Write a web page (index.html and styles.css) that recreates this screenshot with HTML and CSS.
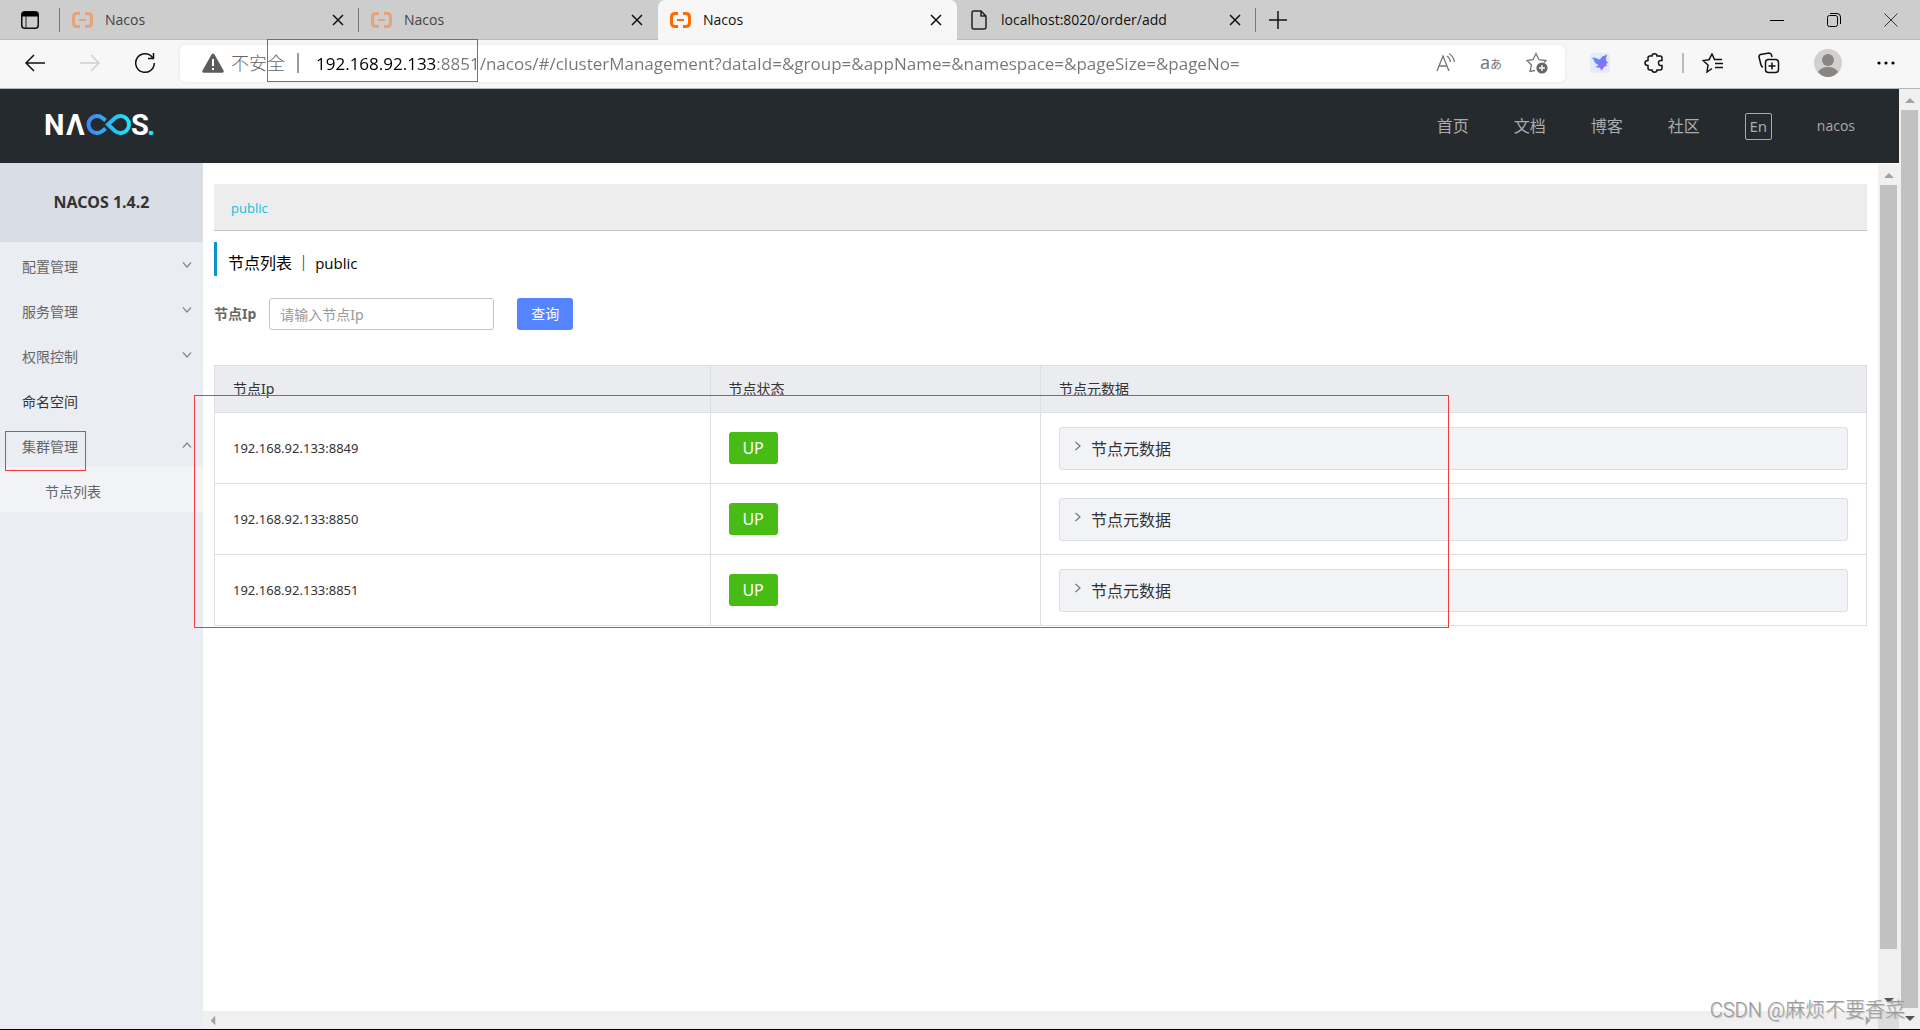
FILE: index.html
```html
<!DOCTYPE html>
<html lang="zh-CN">
<head>
<meta charset="utf-8">
<title>Nacos</title>
<link rel="stylesheet" href="styles.css">
</head>
<body>
<svg class="defs" aria-hidden="true">
  <symbol id="brand" viewBox="0 0 21 16"><path d="M8 1.500H5Q1.500 1.500 1.500 5v6Q1.500 14.500 5 14.500h3M13 1.500h3Q19.500 1.500 19.500 5v6Q19.500 14.500 16 14.500h-3" fill="none" stroke="currentColor" stroke-width="3"/><path d="M7 8h7" stroke="currentColor" stroke-width="2"/></symbol>
  <symbol id="cross" viewBox="0 0 12 12"><path d="M1 1l10 10M11 1L1 11" fill="none" stroke="currentColor" stroke-width="1.500"/></symbol>
  <symbol id="chevron" viewBox="0 0 10 6"><path d="M1 .5l4 4.500 4-4.500" fill="none" stroke="currentColor" stroke-width="1.200"/></symbol>
  <symbol id="arrow" viewBox="0 0 10 5"><path d="M0 5L5 0l5 5z" fill="currentColor"/></symbol>
</svg>

<header class="tabbar">
  <button class="tab-menu" aria-label="标签操作"><svg width="18" height="18" viewBox="0 0 18 18"><rect x=".75" y=".75" width="16.500" height="16.500" rx="3" fill="none" stroke="#111" stroke-width="1.500"/><path d="M1 4Q1 1 4 1h10q3 0 3 3v1.500H1z" fill="#000"/><path d="M5 5v12" stroke="#222"/></svg></button>
  <div class="tab divided dim"><svg class="brand"><use href="#brand"/></svg><span class="tab-title">Nacos</span><button class="tab-close" aria-label="关闭"><svg><use href="#cross"/></svg></button></div>
  <div class="tab divided dim"><svg class="brand"><use href="#brand"/></svg><span class="tab-title">Nacos</span><button class="tab-close" aria-label="关闭"><svg><use href="#cross"/></svg></button></div>
  <div class="tab active"><svg class="brand"><use href="#brand"/></svg><span class="tab-title">Nacos</span><button class="tab-close" aria-label="关闭"><svg><use href="#cross"/></svg></button></div>
  <div class="tab"><svg class="page-icon" viewBox="0 0 16 20"><path d="M3 1h7l5 5v11q0 2-2 2H3q-2 0-2-2V3q0-2 2-2zM10 1v5h5" fill="none" stroke="#222" stroke-width="1.500"/></svg><span class="tab-title">localhost:8020/order/add</span><button class="tab-close" aria-label="关闭"><svg><use href="#cross"/></svg></button></div>
  <button class="new-tab" aria-label="新建标签页"><svg width="18" height="18"><path d="M9 0v18M0 9h18" stroke="#111" stroke-width="1.500"/></svg></button>
  <div class="window-buttons">
    <button aria-label="最小化"><svg width="14" height="14"><path d="M0 7.500h14" stroke="#000"/></svg></button>
    <button aria-label="还原"><svg width="14" height="14" fill="none" stroke="#000"><rect x=".5" y="2.500" width="10" height="11" rx="2"/><path d="M3 .5h7q3.500 0 3.500 3.500v7"/></svg></button>
    <button aria-label="关闭窗口"><svg width="14" height="14"><path d="M.5.5l13 13M13.500.5l-13 13" stroke="#333"/></svg></button>
  </div>
</header>

<div class="toolbar">
  <button class="nav-button" aria-label="后退"><svg width="22" height="18" fill="none" stroke="#111" stroke-width="1.500"><path d="M10 1L2 9l8 8M2 9h19"/></svg></button>
  <button class="nav-button" aria-label="前进"><svg width="22" height="18" fill="none" stroke="#d0d0d0" stroke-width="1.500"><path d="M12 1l8 8-8 8M20 9H1"/></svg></button>
  <button class="nav-button" aria-label="刷新"><svg width="22" height="22" fill="none" stroke="#111" stroke-width="1.500"><path d="M18.500 5.500A9.300 9.300 0 1 0 20.300 11M19.500 1v5.500H14"/></svg></button>
  <div class="address">
    <svg class="warning" viewBox="0 0 22 20"><path d="M9.500 1.500q1.500-2 3 0l9 16q.8 2.200-1.500 2.200H2q-2.300 0-1.500-2.200z" fill="#5c5c5c"/><path d="M11 6v7M11 15v2" stroke="#fff" stroke-width="2"/></svg>
    <span class="insecure">不安全</span>
    <i class="bar"></i>
    <input class="url" type="text" aria-label="地址" value="192.168.92.133:8851/nacos/#/clusterManagement?dataId=&amp;group=&amp;appName=&amp;namespace=&amp;pageSize=&amp;pageNo=">
    <button aria-label="大声朗读"><svg width="20" height="20" fill="none" stroke="#777" stroke-width="1.300"><path d="M1 18L7 3l6 15M3 13h8M11 3q3 2 3.500 6M13 .8q4.500 2.500 5.500 8"/></svg></button>
    <button class="translate" aria-label="翻译">a<small>あ</small></button>
    <button aria-label="收藏此页"><svg width="22" height="22"><path d="M9 18.500l-5 1 1.500-6.500L1 8.500l6-.8L10 1.500l3 6.200 7 .8-2 2" fill="none" stroke="#777" stroke-width="1.300"/><circle cx="16" cy="16" r="5.600" fill="#666"/><path d="M16 13v6M13 16h6" stroke="#fff" stroke-width="1.300"/></svg></button>
  </div>
  <div class="tools">
    <button class="tool" aria-label="扩展"><svg width="20" height="20"><defs><linearGradient id="bird" x1="0" y1="0" x2="1" y2="1"><stop offset="0" stop-color="#4fb0f8"/><stop offset=".5" stop-color="#6c7cf6"/><stop offset="1" stop-color="#c45cf0"/></linearGradient></defs><rect width="20" height="20" rx="2" fill="#e8eafc"/><path d="M1.500 5l3-.5Q8 6 10 6.500 11 3 17.500 1.500q-2 3-1.500 5 0 2 2.500 3.500-2 0-2.500 1 .5 1 1.500 1.500-2.500.5-3.500 1.500-1 2.500-3 3.500 0-2-1.500-3-2.500.5-4.500-1 2.500 0 3.500-1.500Q4.500 10.500 3.500 6.500z" fill="url(#bird)"/></svg></button>
    <button class="tool" aria-label="扩展管理"><svg width="20" height="20" fill="none" stroke="#111" stroke-width="1.500"><path d="M6 3h2q0-2.200 2.500-2.200T13 3h3q2 0 2 2v2.500q-3.500-.5-3.500 2.500t3.500 2.500V15q0 2-2 2h-3q0 2.200-2.500 2.200T8 17H6q-2 0-2-2v-2.500q-3 0-3-2.500t3-2.500V5q0-2 2-2z"/></svg></button>
    <i class="bar light"></i>
    <button class="tool" aria-label="收藏夹"><svg width="22" height="20" fill="none" stroke="#111" stroke-width="1.500"><path d="M10 15.500L5 19l1-7-5-4.500 6-.8L10 1l2.500 5.500H20M13 10.500h8M13 14.500h8"/></svg></button>
    <button class="tool" aria-label="集锦"><svg width="22" height="22" fill="none" stroke="#111" stroke-width="1.500"><rect x="7.500" y="7.500" width="13" height="13" rx="3"/><path d="M14 10.500v7M10.500 14h7M5 15Q3.500 15 3 13L1 5q-.3-2 1.500-2.500L11 1q2 0 2.500 2l.5 2"/></svg></button>
    <button class="tool" aria-label="用户"><svg width="28" height="28"><circle cx="14" cy="14" r="14" fill="#d2d0ce"/><circle cx="14" cy="11" r="6" fill="#8a8583"/><path d="M4 23q3-5 10-5t10 5q-4 5-10 5T4 23z" fill="#8a8583"/></svg></button>
    <button class="tool" aria-label="更多"><svg width="18" height="4"><circle cx="2" cy="2" r="1.600"/><circle cx="9" cy="2" r="1.600"/><circle cx="16" cy="2" r="1.600"/></svg></button>
  </div>
</div>

<div class="viewport">
  <div class="app">
    <header class="site-header">
      <a href="#" class="logo" aria-label="Nacos"><svg width="120" height="44"><defs><linearGradient id="loop"><stop offset="0" stop-color="#3f86f8"/><stop offset="1" stop-color="#1be4f4"/></linearGradient></defs><g fill="#fff" class="logo-text"><text x="3" y="31">N</text><text x="25" y="31">Λ</text><text x="90" y="31">S</text><text x="106" y="31" fill="#1be4f4">.</text></g><path d="M64.500 16.500L61.500 14A8.500 8.500 0 1 0 61.500 27L64.500 24.500M67 20.500L74 14A8.500 8.500 0 1 1 74 27z" fill="none" stroke="url(#loop)" stroke-width="4"/></svg></a>
      <nav class="site-nav">
        <a href="#">首页</a><a href="#">文档</a><a href="#">博客</a><a href="#">社区</a>
        <button class="lang">En</button>
        <a href="#" class="user">nacos</a>
      </nav>
    </header>
    <div class="body">
      <aside class="sidebar">
        <h1>NACOS 1.4.2</h1>
        <nav>
          <button class="menu">配置管理<svg><use href="#chevron"/></svg></button>
          <button class="menu">服务管理<svg><use href="#chevron"/></svg></button>
          <button class="menu">权限控制<svg><use href="#chevron"/></svg></button>
          <a href="#" class="menu plain">命名空间</a>
          <button class="menu open">集群管理<svg><use href="#chevron"/></svg></button>
          <a href="#" class="menu sub">节点列表</a>
        </nav>
      </aside>
      <div class="frame">
        <main>
          <div class="namespace"><a href="#">public</a></div>
          <h2>节点列表&nbsp;｜&nbsp;<span class="latin">public</span></h2>
          <form class="search">
            <label for="ip">节点Ip</label>
            <input id="ip" type="text" placeholder="请输入节点Ip">
            <button type="button">查询</button>
          </form>
          <table>
            <colgroup><col class="c-ip"><col class="c-state"><col></colgroup>
            <thead><tr><th>节点Ip</th><th>节点状态</th><th>节点元数据</th></tr></thead>
            <tbody>
              <tr><td>192.168.92.133:8849</td><td><span class="up">UP</span></td><td><button class="meta"><svg><use href="#chevron"/></svg>节点元数据</button></td></tr>
              <tr><td>192.168.92.133:8850</td><td><span class="up">UP</span></td><td><button class="meta"><svg><use href="#chevron"/></svg>节点元数据</button></td></tr>
              <tr><td>192.168.92.133:8851</td><td><span class="up">UP</span></td><td><button class="meta"><svg><use href="#chevron"/></svg>节点元数据</button></td></tr>
            </tbody>
          </table>
        </main>
        <div class="scroll-y inner"><svg><use href="#arrow"/></svg><i></i><svg class="down"><use href="#arrow"/></svg></div>
        <div class="scroll-x"><svg class="left"><use href="#arrow"/></svg><svg class="right"><use href="#arrow"/></svg></div>
        <div class="corner"></div>
      </div>
    </div>
  </div>
  <div class="scroll-y outer"><svg><use href="#arrow"/></svg><i></i><svg class="down"><use href="#arrow"/></svg></div>
</div>

<div class="mark mark-url"></div>
<div class="mark mark-menu"></div>
<div class="mark mark-table"></div>
<div class="watermark">CSDN @麻烦不要香菜</div>
</body>
</html>
```
FILE: styles.css
```css
* { box-sizing: border-box; }
body {
  margin: 0;
  min-height: 100vh;
  display: flex;
  flex-direction: column;
  position: relative;
  overflow: hidden;
  background: #fff;
  border-bottom: 1px solid #000;
  color: #333;
  font: 14px/20px "Noto Sans", "Noto Sans CJK SC", sans-serif;
}
button { padding: 0; border: 0; background: none; font: inherit; color: inherit; }
a { color: inherit; text-decoration: none; }
svg { display: block; flex: none; }
.defs { position: absolute; width: 0; height: 0; }

/* Browser tabs */
.tabbar {
  display: flex;
  height: 40px;
  background: #cdcdcd;
  border-bottom: 1px solid #bbb;
  font-family: "Open Sans", sans-serif;
}
.tab-menu { width: 60px; display: flex; align-items: center; justify-content: center; position: relative; }
.tab-menu::after, .tab.divided:not(:has(+ .active))::after, .tab:has(+ .new-tab)::after {
  content: "";
  position: absolute;
  right: 0;
  top: 8px;
  width: 1px;
  height: 24px;
  background: #777;
}
.tab { flex: 0 1 299px; display: flex; align-items: center; position: relative; padding: 0 15px 0 12px; color: #111; }
.tab.active { background: #f7f7f7; border-radius: 7px 7px 0 0; margin-bottom: -1px; }
.tab.dim .tab-title { color: #444; }
.brand { width: 21px; height: 16px; color: #ff6a00; margin-right: 12px; }
.dim .brand { color: #e6a377; }
.page-icon { width: 16px; height: 20px; margin: 0 14px 0 2px; }
.tab-title { flex: 1; font-size: 14px; }
.tab-close svg { width: 12px; height: 12px; color: #111; }
.new-tab { width: 44px; display: grid; place-items: center; }
.window-buttons { margin-left: auto; display: flex; padding-right: 22px; gap: 43px; align-items: center; }

/* Browser toolbar */
.toolbar {
  display: flex;
  align-items: center;
  height: 49px;
  padding-bottom: 2px;
  background: #f7f7f7;
  border-bottom: 1px solid #b5b5b5;
  padding-left: 24px;
}
.nav-button { margin-right: 33px; }
.nav-button + .nav-button + .nav-button { margin-right: 24px; }
.address {
  flex: 1;
  display: flex;
  align-items: center;
  height: 37px;
  padding: 0 17px 0 22px;
  background: #fff;
  border-radius: 5px;
  box-shadow: 0 0 3px #ddd;
  gap: 24px;
}
.warning { width: 22px; height: 20px; margin-right: -17px; }
.insecure { font-size: 18px; line-height: 24px; color: #666; font-weight: 300; margin-right: -12px; }
.bar { width: 2px; height: 20px; background: #999; }
.address .bar { margin-right: -7px; }
.bar.light { background: #bbb; }
.url {
  flex: 1;
  min-width: 0;
  height: 32px;
  padding: 0;
  border: 0;
  outline: 0;
  font: 17px/24px "Open Sans", sans-serif;
  color: transparent;
  background: linear-gradient(to right, #000 120px, #767676 120px);
  -webkit-background-clip: text;
  background-clip: text;
}
.translate { font-size: 18px; color: #777; }
.translate small { font-size: 12px; }
.tools { display: flex; align-items: center; gap: 18px; padding: 0 24px 0 25px; }
.tool { display: grid; place-items: center; min-width: 20px; }
.tool + .tool { margin-left: 16px; }

/* Console page */
.viewport { flex: 1; display: flex; }
.app { flex: 1; display: flex; flex-direction: column; min-width: 0; }
.site-header {
  height: 74px;
  display: flex;
  align-items: center;
  justify-content: space-between;
  padding: 0 44px 0 41px;
  background: #252a2f;
}
.logo-text { font: 700 29px Roboto, sans-serif; }
.site-nav { display: flex; align-items: center; gap: 45px; font-size: 16px; color: #a9abad; }
.lang { width: 27px; height: 27px; border: 1px solid #a9abad; border-radius: 2px; font-size: 15px; line-height: 22px; }
.user { font: 14px/20px "Open Sans", sans-serif; }
.body { flex: 1; display: flex; }
.sidebar { width: 203px; background: #eaedf2; }
.sidebar h1 {
  margin: 0;
  height: 79px;
  text-align: center;
  background: #d9dde5;
  font: 700 16px/78px "Noto Sans", sans-serif;
}
.menu {
  display: flex;
  align-items: center;
  justify-content: space-between;
  width: 100%;
  height: 45px;
  padding: 5px 11px 0 22px;
  color: #666;
}
.menu svg { width: 10px; height: 6px; color: #888; margin-bottom: 4px; }
.menu.open svg { transform: rotate(180deg); }
.menu.plain { color: #333; }
.menu.sub { padding-left: 45px; background: #f1f3f7; }

.frame { flex: 1; min-width: 0; display: grid; grid-template: 1fr 18px / 1fr 21px; padding-top: 1px; }
main { padding: 20px 11px; }
.namespace {
  height: 47px;
  padding: 0 17px;
  background: #ededed;
  border-bottom: 1px solid #c5c5c5;
  font: 13px/48px "Open Sans", sans-serif;
  color: #15bdd8;
}
h2 {
  margin: 11px 0 22px;
  height: 34px;
  padding: 0 11px;
  border-left: 3px solid #0a94c8;
  font: 16px/40px "Noto Sans CJK SC", sans-serif;
  color: #000;
}
.latin { font: 15px "Open Sans", sans-serif; }
.search { display: flex; align-items: center; height: 32px; }
.search label { font-weight: 700; color: #666; margin-right: 13px; }
.search input {
  width: 225px;
  height: 32px;
  margin-right: 23px;
  padding: 0 10px;
  border: 1px solid #c4c6cf;
  border-radius: 3px;
  font: inherit;
}
.search input::placeholder { color: #999; opacity: 1; }
.search button { width: 56px; height: 32px; border-radius: 3px; background: #5584ff; color: #fff; }
table { width: 100%; margin-top: 35px; table-layout: fixed; border-collapse: collapse; }
.c-ip { width: 30%; }
.c-state { width: 20%; }
th, td { border: 1px solid #dcdee3; text-align: left; padding: 0 18px; }
th { height: 47px; background: #ebecf0; font-weight: 400; }
td { height: 71px; font: 13px/20px "Noto Sans", sans-serif; }
.up {
  display: block;
  width: 49px;
  height: 32px;
  border-radius: 3px;
  background: #46bc15;
  color: #fff;
  text-align: center;
  font-size: 16px;
  line-height: 33px;
}
.meta {
  display: flex;
  align-items: center;
  gap: 8px;
  width: 100%;
  height: 43px;
  padding: 0 13px;
  border: 1px solid #dcdee3;
  border-radius: 3px;
  background: #f2f3f7;
  font: 16px/24px "Noto Sans CJK SC", sans-serif;
}
.meta svg { width: 10px; height: 6px; color: #777; transform: rotate(-90deg); margin-bottom: 4px; }

/* Scrollbars */
.scroll-y {
  display: flex;
  flex-direction: column;
  align-items: center;
  width: 21px;
  padding: 9px 0 8px;
  background: #f0f0f0;
  color: #a3a3a3;
}
.scroll-y svg { width: 10px; height: 5px; margin-bottom: 7px; }
.scroll-y i { width: 17px; background: #c1c1c1; flex: 1; }
.scroll-y.inner i { flex: 0 1 92%; }
.scroll-y .down { margin: auto 0 0; transform: rotate(180deg); color: #555; }
.scroll-y.outer .down { margin-top: 8px; }
.scroll-x { display: flex; align-items: center; justify-content: space-between; padding: 0 5px; background: #f0f0f0; color: #a3a3a3; }
.scroll-x svg { width: 10px; height: 5px; }
.left { transform: rotate(-90deg); }
.right { transform: rotate(90deg); }
.corner { background: #dcdcdc; }

/* Annotations */
.mark { position: absolute; border: 1px solid #f23c3c; pointer-events: none; }
.mark-url { left: 267px; top: 39px; width: 211px; height: 43px; }
.mark-menu { left: 5px; top: 431px; width: 81px; height: 40px; }
.mark-table { left: 194px; top: 395px; width: 1255px; height: 233px; }
.watermark {
  position: absolute;
  right: 15px;
  bottom: 5px;
  font: 300 20px/28px Roboto, "Noto Sans CJK SC", sans-serif;
  color: #999;
  text-shadow: 1px 1px 1px #bbb;
}
```
